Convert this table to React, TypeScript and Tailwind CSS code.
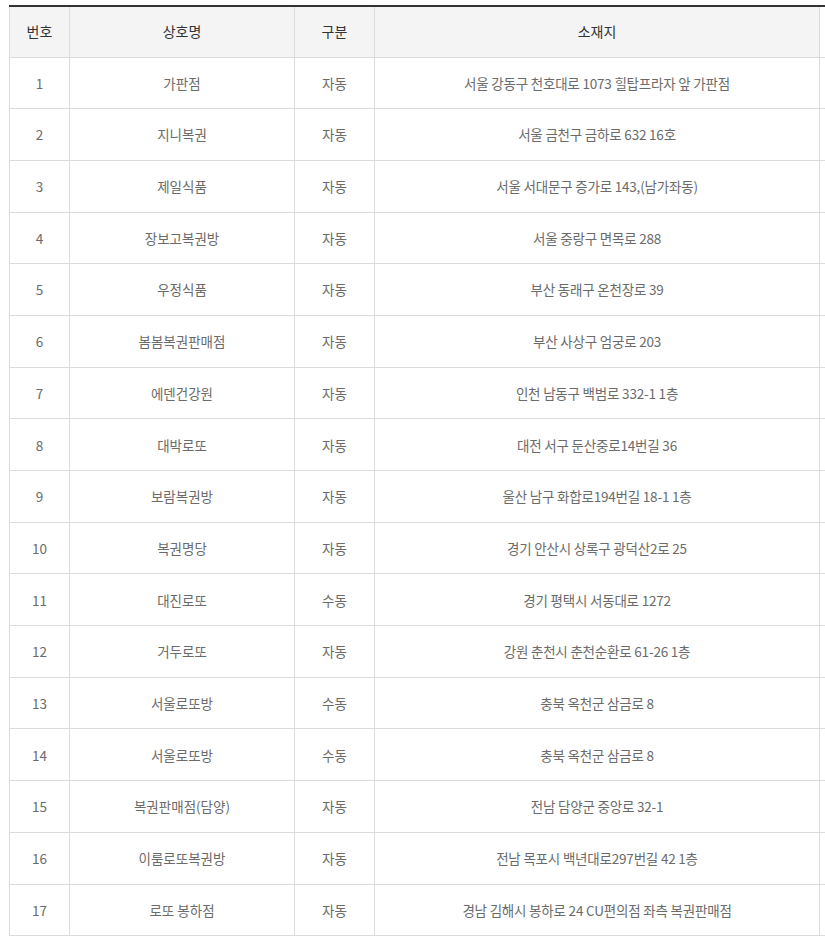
const ROWS: [string, string, string][] = [
  ['가판점', '자동', '서울 강동구 천호대로 1073 힐탑프라자 앞 가판점'],
  ['지니복권', '자동', '서울 금천구 금하로 632 16호'],
  ['제일식품', '자동', '서울 서대문구 증가로 143,(남가좌동)'],
  ['장보고복권방', '자동', '서울 중랑구 면목로 288'],
  ['우정식품', '자동', '부산 동래구 온천장로 39'],
  ['봄봄복권판매점', '자동', '부산 사상구 엄궁로 203'],
  ['에덴건강원', '자동', '인천 남동구 백범로 332-1 1층'],
  ['대박로또', '자동', '대전 서구 둔산중로14번길 36'],
  ['보람복권방', '자동', '울산 남구 화합로194번길 18-1 1층'],
  ['복권명당', '자동', '경기 안산시 상록구 광덕산2로 25'],
  ['대진로또', '수동', '경기 평택시 서동대로 1272'],
  ['거두로또', '자동', '강원 춘천시 춘천순환로 61-26 1층'],
  ['서울로또방', '수동', '충북 옥천군 삼금로 8'],
  ['서울로또방', '수동', '충북 옥천군 삼금로 8'],
  ['복권판매점(담양)', '자동', '전남 담양군 중앙로 32-1'],
  ['이룸로또복권방', '자동', '전남 목포시 백년대로297번길 42 1층'],
  ['로또 봉하점', '자동', '경남 김해시 봉하로 24 CU편의점 좌측 복권판매점'],
]

const cell = 'border border-[#dcdcdc] text-center align-middle'

export default function App() {
  return (
    <div className="w-[825px] h-[942px] overflow-hidden bg-white pt-[5px] pl-[9px] font-['Noto_Sans_CJK_KR','Noto_Sans',sans-serif] text-[14px]">
      <table className="w-[830px] table-fixed border-collapse border-t-2 border-t-[#333]">
        <colgroup>
          <col className="w-[60px]" />
          <col className="w-[225px]" />
          <col className="w-[80px]" />
          <col className="w-[445px]" />
          <col className="w-[20px]" />
        </colgroup>
        <thead>
          <tr className="h-[51px]">
            <th className={`${cell} bg-[#f4f4f4] font-normal text-[#333]`}>번호</th>
            <th className={`${cell} bg-[#f4f4f4] font-normal text-[#333]`}>상호명</th>
            <th className={`${cell} bg-[#f4f4f4] font-normal text-[#333]`}>구분</th>
            <th className={`${cell} bg-[#f4f4f4] font-normal text-[#333]`}>소재지</th>
            <th className="border-b border-[#dcdcdc]"></th>
          </tr>
        </thead>
        <tbody>
          {ROWS.map(([name, kind, addr], i) => (
            <tr key={i} className="h-[51.7px] text-[#6b6b6b] text-[13.5px]">
              <td className={cell}>{i + 1}</td>
              <td className={cell}>{name}</td>
              <td className={cell}>{kind}</td>
              <td className={`${cell} tracking-[-0.2px]`}>{addr}</td>
              <td className="border-b border-[#dcdcdc]"></td>
            </tr>
          ))}
        </tbody>
      </table>
    </div>
  )
}
